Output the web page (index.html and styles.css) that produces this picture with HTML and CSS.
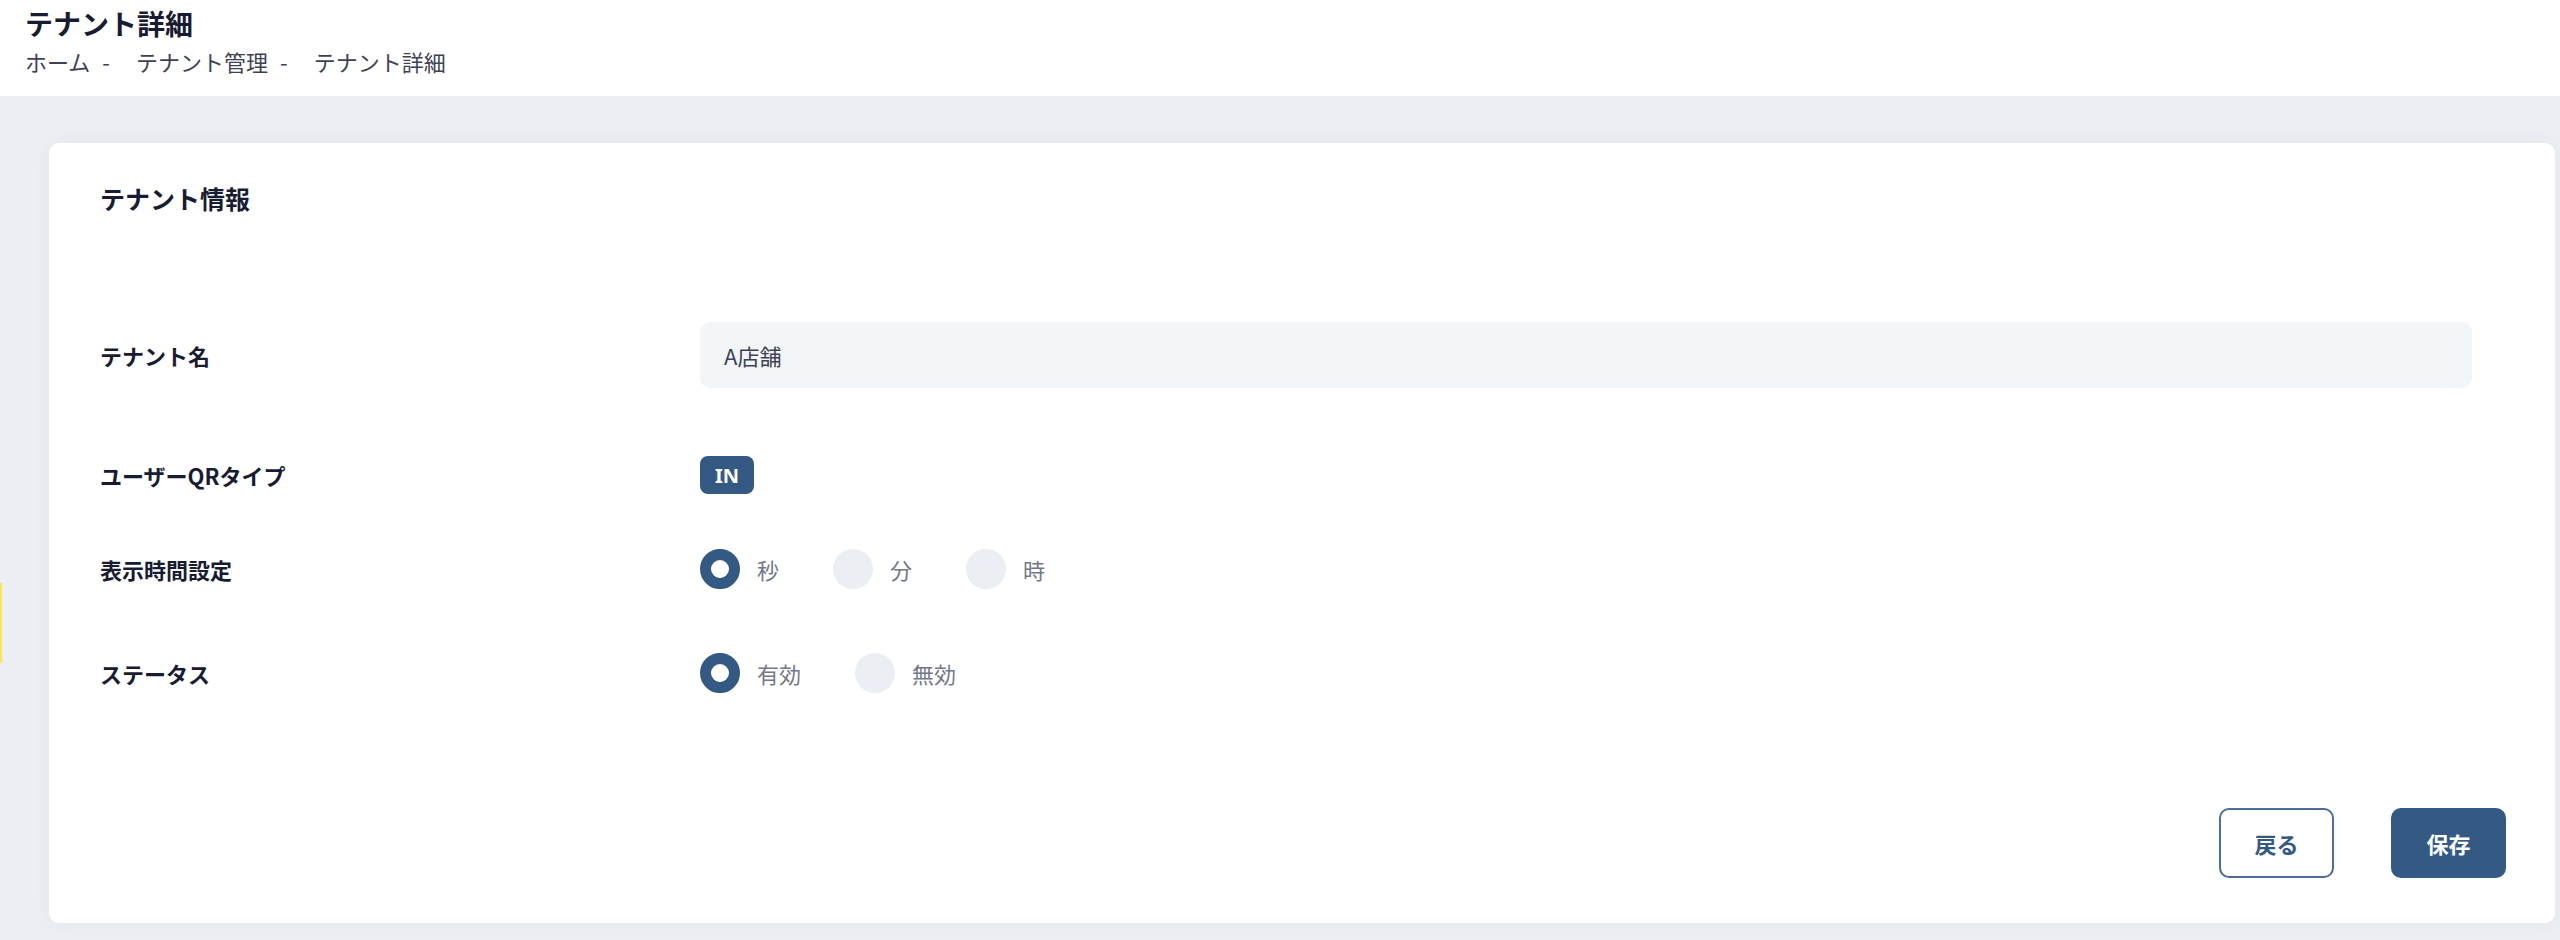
FILE: index.html
```html
<!DOCTYPE html>
<html lang="ja">
<head>
<meta charset="utf-8">
<title>テナント詳細</title>
<link rel="stylesheet" href="styles.css">
</head>
<body>
<div class="page">
  <header class="subheader">
    <h1 class="page-title">テナント詳細</h1>
    <nav class="breadcrumb">
      <span class="crumb">ホーム</span><span class="sep">-</span><span class="crumb">テナント管理</span><span class="sep">-</span><span class="crumb">テナント詳細</span>
    </nav>
  </header>
  <main class="content">
    <div class="marker"></div>
    <section class="card">
      <h2 class="card-title">テナント情報</h2>
      <div class="form">
        <div class="row row-name">
          <div class="label">テナント名</div>
          <div class="input">A店舗</div>
        </div>
        <div class="row row-type">
          <div class="label">ユーザーQRタイプ</div>
          <div class="control"><span class="badge">IN</span></div>
        </div>
        <div class="row row-time">
          <div class="label">表示時間設定</div>
          <div class="control radios">
            <span class="option"><span class="radio checked"></span><span class="opt-label">秒</span></span>
            <span class="option"><span class="radio"></span><span class="opt-label">分</span></span>
            <span class="option"><span class="radio"></span><span class="opt-label">時</span></span>
          </div>
        </div>
        <div class="row row-status">
          <div class="label">ステータス</div>
          <div class="control radios">
            <span class="option"><span class="radio checked"></span><span class="opt-label">有効</span></span>
            <span class="option"><span class="radio"></span><span class="opt-label">無効</span></span>
          </div>
        </div>
      </div>
      <div class="actions">
        <button class="btn btn-outline">戻る</button>
        <button class="btn btn-primary">保存</button>
      </div>
    </section>
  </main>
</div>
</body>
</html>
```

FILE: styles.css
```css
html, body {
  margin: 0;
  padding: 0;
}

body {
  width: 2560px;
  height: 940px;
  overflow: hidden;
  font-family: "Noto Sans CJK JP", "Noto Sans", sans-serif;
  color: #181c32;
  background: #ebeef2;
}

.page {
  display: flex;
  flex-direction: column;
  height: 940px;
}

.subheader {
  background: #ffffff;
  height: 96px;
  box-sizing: border-box;
  padding: 5px 0 0 25px;
}

.page-title {
  margin: 0;
  font-size: 28px;
  line-height: 36px;
  font-weight: 700;
  color: #181c32;
}

.breadcrumb {
  margin-top: 5px;
  font-size: 22px;
  line-height: 30px;
  color: #3f4254;
  display: flex;
  align-items: center;
}

.sep {
  margin: 0 26px 0 12px;
}

.content {
  position: relative;
  flex: 1;
  background: #ebeef2;
  padding: 47px 5px 17px 49px;
  box-sizing: border-box;
}

.marker {
  position: absolute;
  left: 0;
  top: 487px;
  width: 2px;
  height: 80px;
  background: #ffe45a;
}

.card {
  width: 2506px;
  height: 780px;
  box-sizing: border-box;
  background: #ffffff;
  border-radius: 10px;
  box-shadow: 0 0 20px rgba(82, 63, 105, 0.04);
  padding: 37px 49px 45px 51px;
  display: flex;
  flex-direction: column;
}

.card-title {
  margin: 0;
  font-size: 25px;
  line-height: 36px;
  font-weight: 600;
  color: #181c32;
}

.form {
  margin-top: 106px;
  display: flex;
  flex-direction: column;
}

.row {
  display: grid;
  grid-template-columns: 600px 1772px;
  align-items: center;
}

.row-type { margin-top: 68px; }
.row-time { margin-top: 55px; }
.row-status { margin-top: 64px; }

.label {
  font-size: 22px;
  line-height: 30px;
  font-weight: 700;
  color: #181c32;
}

.input {
  height: 66px;
  box-sizing: border-box;
  background: #f3f6f9;
  border-radius: 10px;
  padding: 0 24px;
  display: flex;
  align-items: center;
  font-size: 22px;
  color: #3f4254;
}

.control {
  display: flex;
  align-items: center;
}

.badge {
  display: inline-flex;
  align-items: center;
  justify-content: center;
  width: 54px;
  height: 38px;
  box-sizing: border-box;
  border-radius: 8px;
  background: #345a84;
  color: #ffffff;
  font-size: 20px;
  font-weight: 700;
  font-family: "Noto Sans", "Noto Sans CJK JP", sans-serif;
}

.option {
  display: inline-flex;
  align-items: center;
  margin-right: 54px;
}

.radio {
  width: 40px;
  height: 40px;
  box-sizing: border-box;
  border-radius: 50%;
  background: #ebeef3;
}

.radio.checked {
  background: #ffffff;
  border: 11px solid #345a84;
}

.opt-label {
  margin-left: 17px;
  font-size: 22px;
  line-height: 30px;
  color: #73778a;
}

.actions {
  margin-top: auto;
  display: flex;
  justify-content: flex-end;
  gap: 57px;
}

.btn {
  width: 115px;
  height: 70px;
  box-sizing: border-box;
  border-radius: 10px;
  font-family: "Noto Sans CJK JP", "Noto Sans", sans-serif;
  font-size: 22px;
  font-weight: 700;
  cursor: pointer;
}

.btn-outline {
  background: #ffffff;
  border: 2px solid #4a6e97;
  color: #345a84;
}

.btn-primary {
  background: #345a84;
  border: 2px solid #345a84;
  color: #ffffff;
}
```
